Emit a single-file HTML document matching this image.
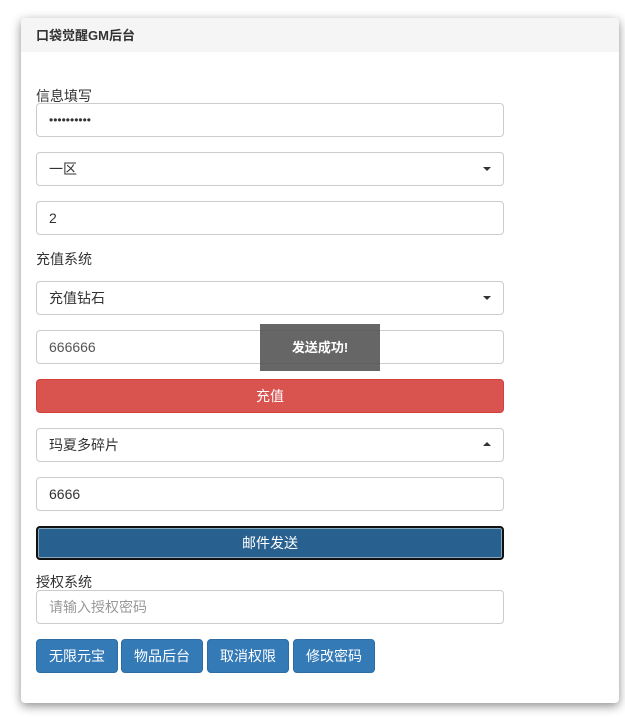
<!DOCTYPE html><html><head><meta charset="utf-8"><style>
body{margin:0;width:625px;height:717px;background:#fff;font-family:"Liberation Sans","Noto Sans CJK SC",sans-serif;font-size:14px;color:#333;position:relative;overflow:hidden}
.panel{position:absolute;left:21px;top:18px;width:598px;height:685px;border-radius:4px;background:#fff;box-shadow:0 3px 10px rgba(0,0,0,.45)}
.hd{height:34px;background:#f5f5f5;border-radius:4px 4px 0 0;font-weight:bold;line-height:36px;padding-left:15px;font-size:13px;color:#333}
.a{position:absolute;left:36px;height:32px;border:1px solid #ccc;border-radius:4px;line-height:32px;padding-left:12px;box-sizing:content-box;width:454px}
.car::after{content:"";position:absolute;right:12px;top:14px;border:4px solid transparent;border-top:4px solid #333;border-bottom:0}
.up::after{content:"";position:absolute;right:12px;top:13px;border:4px solid transparent;border-bottom:4px solid #333;border-top:0}
.lb{position:absolute;left:36px}
.b{position:absolute;height:34px;line-height:32px;color:#fff;text-align:center;border-radius:4px;box-sizing:border-box}
</style></head><body>
<div class="panel"><div class="hd">口袋觉醒GM后台</div></div>
<div class="lb" style="top:86px">信息填写</div>
<div class="a" style="top:103px;font-size:12px">••••••••••</div>
<div class="a car" style="top:152px">一区</div>
<div class="a" style="top:201px">2</div>
<div class="lb" style="top:249px">充值系统</div>
<div class="a car" style="top:281px">充值钻石</div>
<div class="a" style="top:330px;color:#555">666666</div>
<div class="b" style="left:36px;top:379px;width:468px;background:#d9534f;border:1px solid #d43f3a">充值</div>
<div class="a up" style="top:428px">玛夏多碎片</div>
<div class="a" style="top:477px">6666</div>
<div class="b" style="left:36px;top:526px;width:468px;background:#286090;border:2px solid #111;box-shadow:0 0 0 1px #8ab inset;line-height:30px">邮件发送</div>
<div class="lb" style="top:572px">授权系统</div>
<div class="a" style="top:590px;color:#999">请输入授权密码</div>
<div class="b" style="left:36px;top:639px;width:82px;background:#337ab7;border:1px solid #2e6da4">无限元宝</div>
<div class="b" style="left:121px;top:639px;width:82px;background:#337ab7;border:1px solid #2e6da4">物品后台</div>
<div class="b" style="left:207px;top:639px;width:82px;background:#337ab7;border:1px solid #2e6da4">取消权限</div>
<div class="b" style="left:293px;top:639px;width:82px;background:#337ab7;border:1px solid #2e6da4">修改密码</div>
<div style="position:absolute;left:260px;top:324px;width:120px;height:47px;background:rgba(85,85,85,.9);color:#fff;text-align:center;line-height:47px;font-weight:bold;font-size:13px">发送成功!</div>
</body></html>
